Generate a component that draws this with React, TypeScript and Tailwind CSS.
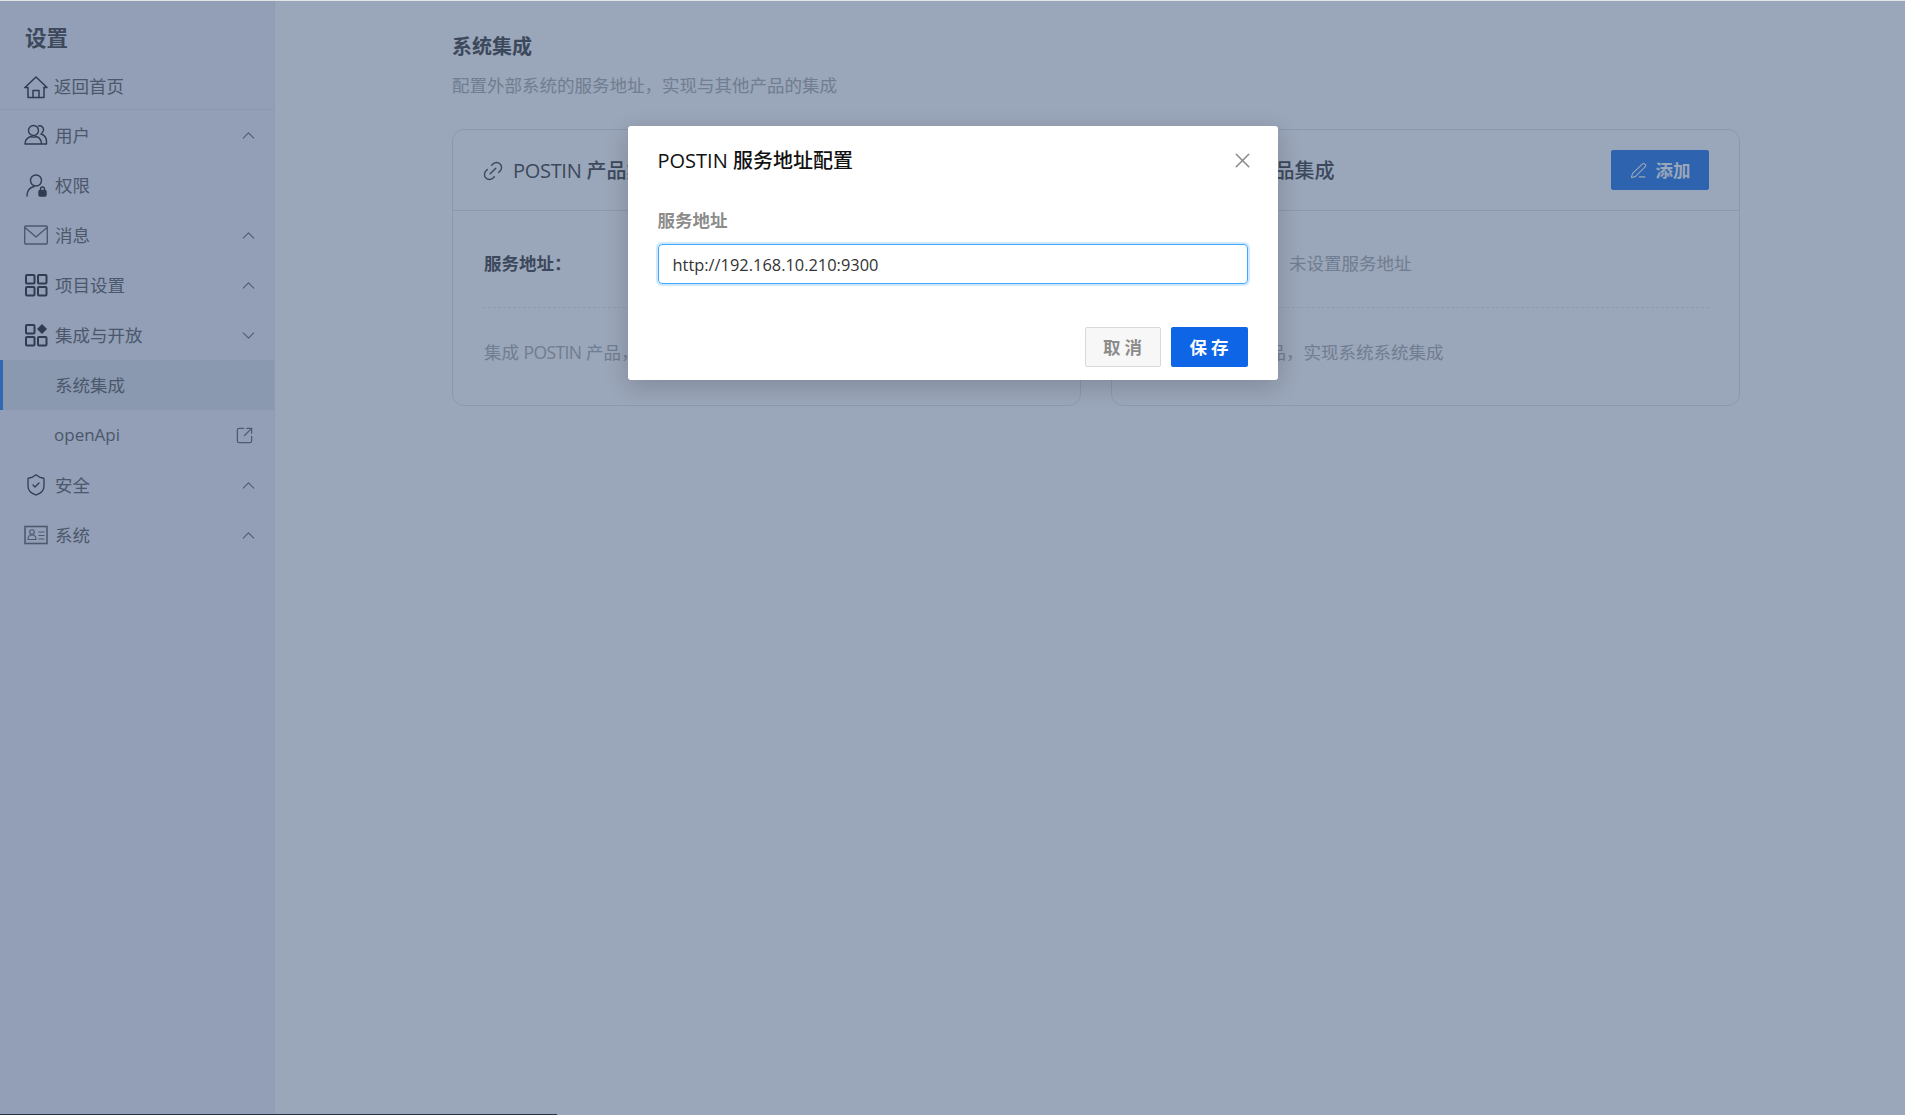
import { ChevronDown, ChevronUp, Link2, PenLine, ShieldCheck, SquareArrowOutUpRight, X } from 'lucide-react';
import type { ReactNode } from 'react';

const font = 'font-["Open_Sans","Noto_Sans_CJK_SC",sans-serif]';

function HomeIcon() {
  return (
    <svg viewBox="0 0 24 24" fill="none" stroke="currentColor" strokeWidth="1.5" strokeLinejoin="round" strokeLinecap="round" className="h-[24px] w-[24px]">
      <path d="M1 12.5 12 2l11 10.5h-3" />
      <path d="M1 12.5h3V22.5h16V12.5" />
      <path d="M9 22.5v-7h6v7" />
    </svg>
  );
}

function UsersIcon() {
  return (
    <svg viewBox="0 0 24 24" fill="none" stroke="currentColor" strokeWidth="1.4" strokeLinejoin="round" strokeLinecap="round" className="h-[24px] w-[24px]">
      <circle cx="9.5" cy="7.5" r="5" />
      <path d="M1 21c0-4.5 3-6.5 5.5-7.5 1.8.8 4.2.8 6 0 2.5 1 5 3 5 7.5z" />
      <path d="M14.5 3c2.8-.8 5 1.2 5 3.8 0 1.8-1 3.2-2.500 4.2 3 1 5.500 3.500 5.500 7.500v2.500h-4" />
    </svg>
  );
}

function UserLockIcon() {
  return (
    <svg viewBox="0 0 24 24" fill="none" stroke="currentColor" strokeWidth="1.4" className="h-[24px] w-[24px]">
      <circle cx="12" cy="7.5" r="5.5" />
      <path d="M3 23c0-5 3-8.5 7-9.5" strokeLinecap="round" />
      <rect x="15" y="17.5" width="7" height="5.5" rx="1" fill="currentColor" />
      <path d="M16.5 17.5v-1.500a2 2 0 0 1 4 0v1.500" />
    </svg>
  );
}

function MailIcon() {
  return (
    <svg viewBox="0 0 24 24" fill="none" stroke="currentColor" strokeWidth="1.4" strokeLinejoin="round" className="h-[24px] w-[24px] opacity-70">
      <rect x="0.7" y="3" width="22.6" height="18" rx="1" />
      <path d="M1 4.5 12 14 23 4.5" />
    </svg>
  );
}

function GridIcon({ diamond = false }: { diamond?: boolean }) {
  return (
    <svg viewBox="0 0 24 24" fill="none" stroke="currentColor" strokeWidth="2" className="h-[24px] w-[24px]">
      <rect x="2" y="2" width="8.5" height="8.5" rx="1" />
      <rect x="2" y="14" width="8.5" height="8.5" rx="1" />
      <rect x="14" y="14" width="8.5" height="8.5" rx="1" />
      {diamond ? (
        <path d="M18 1l5 5-5 5-5-5z" fill="currentColor" stroke="none" />
      ) : (
        <rect x="14" y="2" width="8.5" height="8.5" rx="1" />
      )}
    </svg>
  );
}

function IdCardIcon() {
  return (
    <svg viewBox="0 0 24 24" fill="none" stroke="currentColor" strokeWidth="1.1" className="h-[24px] w-[24px] opacity-70">
      <rect x="1" y="3.5" width="22" height="17" strokeWidth="1.6" />
      <circle cx="8" cy="9" r="2.3" />
      <path d="M4 16.5c0-3 2-4.5 4-4.5s4 1.5 4 4.5z" />
      <path d="M14.5 9h6M14.5 12.5h6M14.5 16h6" />
    </svg>
  );
}

function NavRow({ icon, label, open, closed }: { icon: ReactNode; label: string; open?: boolean; closed?: boolean }) {
  return (
    <div className="flex h-[50px] items-center pl-[24px] pr-[15px]">
      <span className="flex w-[24px] justify-center text-[#3f3f3f]">{icon}</span>
      <span className="ml-[7px] flex-1 text-[17.5px] text-[#707070]">{label}</span>
      {closed && <ChevronUp size={21} strokeWidth={1.2} className="text-[#777]" />}
      {open && <ChevronDown size={21} strokeWidth={1.2} className="text-[#777]" />}
    </div>
  );
}

function IntegrationCard({ right }: { right?: boolean }) {
  return (
    <div className="flex-1 rounded-[12px] border border-[#e6e6ea]">
      <div className="flex h-[81px] items-center justify-between border-b border-[#e6e6ea] px-[30px]">
        <div className="flex items-center pt-[2px]">
          <Link2 size={24} strokeWidth={1.4} className="-ml-[2px] -rotate-45 text-[#555]" />
          <span className={right ? 'ml-[17px] text-[20px] font-medium text-[#555]' : 'ml-[8px] text-[20px] font-medium text-[#555]'}>
            <span className="tracking-[-0.3px]">POSTIN</span> 产品集成
          </span>
        </div>
        <button className="flex h-[40px] w-[98px] items-center justify-center gap-[9px] rounded-[2px] border border-[#3985ed] bg-[#3985ed] text-[17.5px] font-bold text-white">
          <PenLine size={17} strokeWidth={1.5} />
          添加
        </button>
      </div>
      <div className="mx-[30px] flex h-[97px] items-center border-b border-dashed border-[#e9e9ec] pt-[8px] text-[17.5px]">
        <span className="w-[147px] pl-px font-bold text-[#555]">服务地址：</span>
        <span className="text-[#b4b4b4]">未设置服务地址</span>
      </div>
      <div className={right ? 'flex h-[97px] items-center pb-[8px] pl-[37px] text-[17.5px] text-[#b4b4b4]' : 'flex h-[97px] items-center pb-[8px] pl-[31px] text-[17.5px] text-[#b4b4b4]'}>
        <span className="whitespace-pre">
          集成 <span className="tracking-[-0.6px]">POSTIN</span> 产品，实现系统系统集成
        </span>
      </div>
    </div>
  );
}

export default function App() {
  return (
    <div className={`relative flex h-[1115px] w-[1905px] overflow-hidden bg-white ${font}`}>
      {/* Sidebar */}
      <aside className="w-[275px] shrink-0 border-r border-[#eceef2] bg-[#f1f2fa]">
        <div className="flex h-[62px] items-end pb-[11px] pl-[25px] text-[21.5px] font-bold leading-[26px] text-[#555]">设置</div>
        <div className="flex h-[48px] items-center border-b border-[#e4e6ee] pt-[2px] pl-[24px]">
          <span className="flex w-[24px] justify-center text-[#3f3f3f]">
            <HomeIcon />
          </span>
          <span className="ml-[6px] text-[17.5px] text-[#707070]">返回首页</span>
        </div>
        <NavRow icon={<UsersIcon />} label="用户" closed />
        <NavRow icon={<UserLockIcon />} label="权限" />
        <NavRow icon={<MailIcon />} label="消息" closed />
        <NavRow icon={<GridIcon />} label="项目设置" closed />
        <NavRow icon={<GridIcon diamond />} label="集成与开放" open />
        <div className="flex h-[50px] items-center border-l-[3px] border-[#3d8ef8] bg-[#e4e8ef] pl-[52px] text-[17.5px] text-[#707070]">系统集成</div>
        <div className="flex h-[50px] items-center justify-between pl-[54px] pr-[20px] text-[17px] text-[#707070]">
          openApi
          <SquareArrowOutUpRight size={19} strokeWidth={1.6} className="text-[#777]" />
        </div>
        <NavRow icon={<ShieldCheck size={28} strokeWidth={1.3} />} label="安全" closed />
        <NavRow icon={<IdCardIcon />} label="系统" closed />
      </aside>

      {/* Main */}
      <main className="flex-1 pl-[177px] pr-[165px]">
        <h2 className="mt-[34px] text-[20px] font-bold leading-[26px] text-[#555]">系统集成</h2>
        <p className="mt-[12px] text-[17.5px] leading-[26px] text-[#b4b4b4]">配置外部系统的服务地址，实现与其他产品的集成</p>
        <div className="mt-[31px] flex gap-[30px]">
          <IntegrationCard />
          <IntegrationCard right />
        </div>
      </main>

      {/* Modal */}
      <div className="absolute inset-0 flex justify-center bg-[#1e3963]/45 pt-[126px]">
        <div className="flex h-[254px] w-[650px] flex-col rounded-[3px] bg-white px-[30px] shadow-[0_6px_24px_rgba(0,0,0,0.18)]">
          <div className="flex h-[70px] items-center justify-between">
            <span className="text-[20px] font-medium text-[#111]">POSTIN 服务地址配置</span>
            <X size={25} strokeWidth={1.5} className="-mr-[7px] -mt-[2px] text-[#8c8c8c]" />
          </div>
          <label className="mt-[11px] text-[17.5px] font-bold leading-[26px] text-[#8c8c8c]">服务地址</label>
          <input
            readOnly
            value="http://192.168.10.210:9300"
            className="mt-[11px] h-[40px] w-full rounded-[4px] border border-[#40a9ff] px-[14px] text-[16.4px] text-[#333] shadow-[0_0_0_2px_rgba(24,144,255,0.2)] outline-none"
          />
          <div className="mt-[43px] flex justify-end gap-[10px]">
            <button className="h-[40px] w-[76px] rounded-[2px] border border-[#d9d9d9] bg-[#f7f7f7] pl-[4px] text-[17.5px] font-bold tracking-[4px] text-[#8c8c8c]">取消</button>
            <button className="h-[40px] w-[77px] rounded-[2px] bg-[#0e65e5] pl-[4px] text-[17.5px] font-bold tracking-[4px] text-white">保存</button>
          </div>
        </div>
      </div>

      {/* Window edge left in the capture */}
      <div className="absolute inset-x-0 top-0 h-px bg-[#e4e4e4]" />
      <div className="absolute bottom-0 left-0 h-px w-[557px] bg-[#2a2f45]" />
    </div>
  );
}
